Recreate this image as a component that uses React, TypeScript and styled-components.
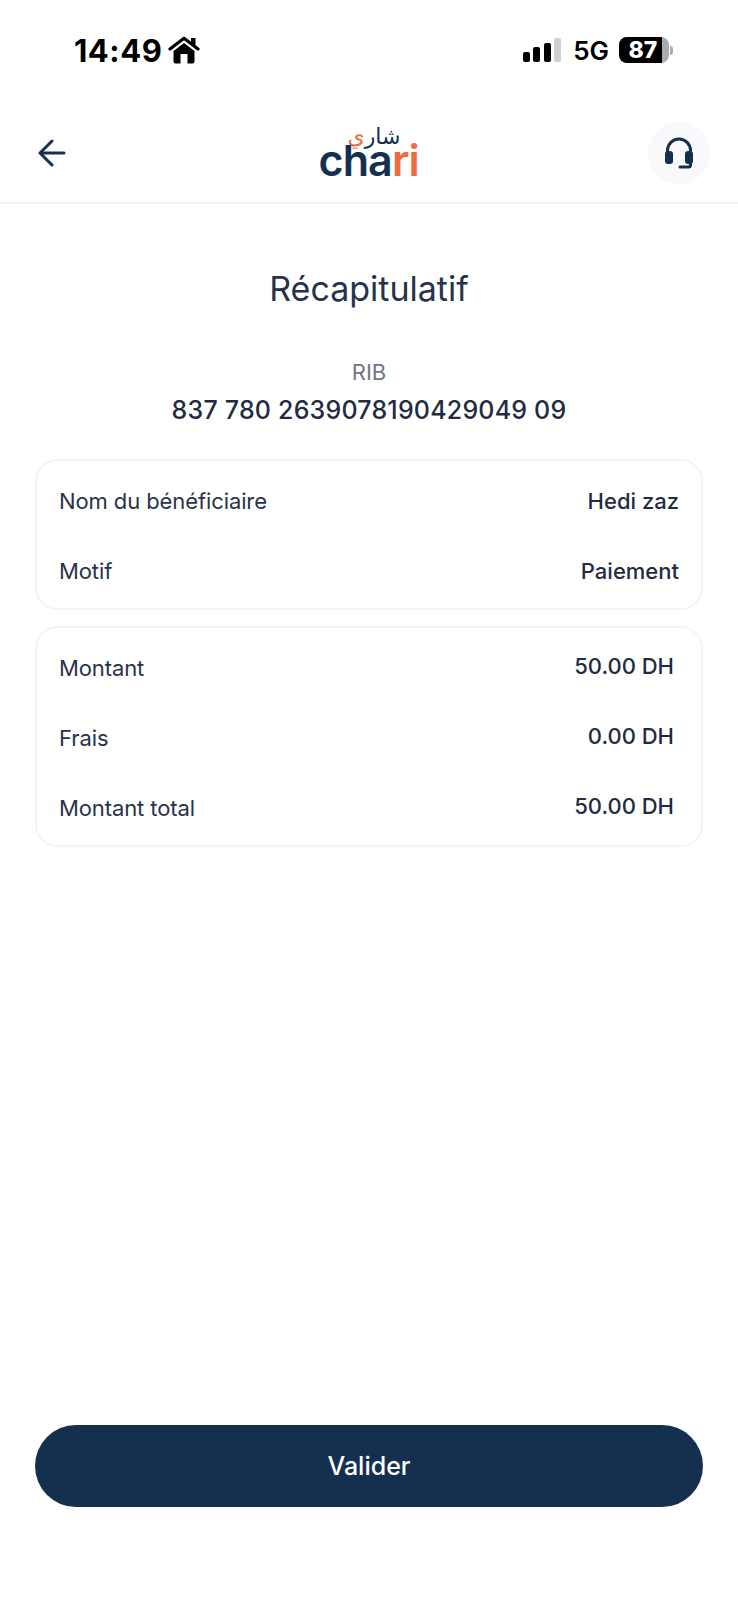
import styled, { createGlobalStyle } from 'styled-components'

const Global = createGlobalStyle`
    html, body {
        margin: 0;
        padding: 0;
        background: #fff;
    }
    * {
        box-sizing: border-box;
    }
`

const Page = styled.div`
    width: 738px;
    height: 1600px;
    display: flex;
    flex-direction: column;
    background: #fff;
    font-family: Inter, 'Noto Sans', sans-serif;
    color: #1f2c41;
    overflow: hidden;
`

const StatusBar = styled.div`
    height: 100px;
    padding: 32px 65px 0 74px;
    display: flex;
    justify-content: space-between;
    align-items: flex-start;
    color: #000;
`

const TimeGroup = styled.div`
    display: flex;
    align-items: center;
    gap: 6px;
    height: 36px;
`

const Time = styled.span`
    font-size: 31px;
    font-weight: 700;
    letter-spacing: 0.5px;
`

const StatusRight = styled.div`
    display: flex;
    align-items: center;
    height: 36px;
`

const Signal = styled.div`
    display: flex;
    align-items: flex-end;
    gap: 3.5px;
    height: 24px;
    margin-right: 12px;
`

const Bar = styled.span<{ $h: number; $off?: boolean }>`
    width: 7px;
    height: ${(p) => p.$h}px;
    border-radius: 2px;
    background: ${(p) => (p.$off ? '#cdd0d4' : '#000')};
`

const Network = styled.span`
    font-size: 26px;
    font-weight: 600;
    margin-right: 10px;
`

const Battery = styled.div`
    width: 50px;
    height: 26px;
    border-radius: 8px;
    overflow: hidden;
    background: #a9adb2;
`

const BatteryFill = styled.div`
    width: 43px;
    height: 100%;
    background: #000;
    color: #fff;
    font-size: 23px;
    font-weight: 800;
    line-height: 26px;
    text-align: center;
    padding-left: 5px;
`

const BatteryTip = styled.span`
    width: 3px;
    height: 9px;
    margin-left: 1px;
    border-radius: 0 3px 3px 0;
    background: #a9adb2;
`

const Header = styled.header`
    height: 104px;
    padding: 0 28px 0 38px;
    display: flex;
    align-items: flex-start;
    justify-content: space-between;
    border-bottom: 2px solid #f2f3f4;
`

const BackButton = styled.div`
    margin-top: 39px;
    width: 32px;
    height: 28px;
    display: flex;
    align-items: center;
`

const Logo = styled.div`
    margin-top: 28px;
    margin-left: 20px;
    width: 101px;
    height: 50px;
    position: relative;
`

const LogoWord = styled.div`
    position: absolute;
    left: 0;
    bottom: -1px;
    font-size: 43px;
    font-weight: 600;
    line-height: 38px;
    letter-spacing: -0.9px;
    color: #14304e;
`

const LogoAccent = styled.span`
    color: #ee6c42;
`

const LogoArabic = styled.div`
    position: absolute;
    right: 19px;
    top: -3px;
    font-family: 'DejaVu Sans', sans-serif;
    font-size: 22px;
    line-height: 24px;
    color: #14304e;
    direction: rtl;
`

const LogoArabicAccent = styled.span`
    color: #ee6c42;
`

const SupportButton = styled.div`
    margin-top: 22px;
    width: 62px;
    height: 62px;
    border-radius: 50%;
    background: #f9f9fb;
    display: flex;
    align-items: center;
    justify-content: center;
`

const Content = styled.main`
    flex: 1;
    display: flex;
    flex-direction: column;
    padding: 0 35px 93px;
`

const Title = styled.h1`
    margin: 64px 0 0;
    font-size: 34px;
    line-height: 42px;
    font-weight: 400;
    text-align: center;
    color: #27334a;
`

const RibLabel = styled.div`
    margin-top: 49px;
    font-size: 22px;
    line-height: 26px;
    text-align: center;
    color: #6f7785;
`

const RibValue = styled.div`
    margin-top: 9px;
    font-size: 25px;
    line-height: 32px;
    font-weight: 500;
    text-align: center;
    letter-spacing: 0.2px;
    color: #1f2c41;
`

const Card = styled.section<{ $mt: number; $pr: number }>`
    margin-top: ${(p) => p.$mt}px;
    padding: 5px ${(p) => p.$pr}px 2px 22px;
    border: 2px solid #f3f4f6;
    border-radius: 22px;
    display: flex;
    flex-direction: column;
`

const Row = styled.div`
    height: 70px;
    display: flex;
    align-items: center;
    justify-content: space-between;
`

const Label = styled.span`
    font-size: 22px;
    letter-spacing: -0.1px;
    color: #27334a;
`

const Value = styled.span<{ $raised?: boolean }>`
    font-size: 22px;
    font-weight: 500;
    color: #1f2c41;
    transform: translateY(${(p) => (p.$raised ? -2 : 0)}px);
`

const SubmitButton = styled.button`
    margin-top: auto;
    width: 668px;
    height: 82px;
    border: none;
    border-radius: 41px;
    background: #14304e;
    color: #fff;
    font-family: Inter, sans-serif;
    font-size: 25px;
    font-weight: 500;
`

export default function App() {
    return (
        <Page>
            <Global />
            <StatusBar>
                <TimeGroup>
                    <Time>14:49</Time>
                    <svg width="32" height="28" viewBox="0 0 32 28">
                        <rect x="23" y="2" width="4.5" height="8" fill="#000" />
                        <path d="M2 13 16 2.2 30 13" fill="none" stroke="#000" strokeWidth="3.2" strokeLinecap="round" strokeLinejoin="round" />
                        <path
                            fillRule="evenodd"
                            d="M5.5 15 16 7l10.5 8v10.5a2 2 0 0 1-2 2h-17a2 2 0 0 1-2-2V15Zm7 3v9.5h7V18h-7Z"
                            fill="#000"
                        />
                    </svg>
                </TimeGroup>
                <StatusRight>
                    <Signal>
                        <Bar $h={10} />
                        <Bar $h={15} />
                        <Bar $h={19} />
                        <Bar $h={24} $off />
                    </Signal>
                    <Network>5G</Network>
                    <Battery>
                        <BatteryFill>87</BatteryFill>
                    </Battery>
                    <BatteryTip />
                </StatusRight>
            </StatusBar>

            <Header>
                <BackButton>
                    <svg width="28" height="28" viewBox="0 0 28 28" fill="none" stroke="#14304e" strokeWidth="3" strokeLinecap="round" strokeLinejoin="round">
                        <path d="M26 14H3" />
                        <path d="M14 2 2 14l12 12" />
                    </svg>
                </BackButton>
                <Logo>
                    <LogoArabic>
                        شار<LogoArabicAccent>ي</LogoArabicAccent>
                    </LogoArabic>
                    <LogoWord>
                        cha<LogoAccent>ri</LogoAccent>
                    </LogoWord>
                </Logo>
                <SupportButton>
                    <svg width="30" height="34" viewBox="0 0 30 34" fill="none">
                        <path d="M3.5 19V14.5a11.5 11.5 0 0 1 23 0V19" stroke="#14304e" strokeWidth="3" />
                        <rect x="1" y="15" width="8" height="13" rx="3" fill="#14304e" />
                        <rect x="21" y="15" width="8" height="13" rx="3" fill="#14304e" />
                        <path d="M26.5 26v3a2 2 0 0 1-2 2H16" stroke="#14304e" strokeWidth="3" strokeLinecap="round" />
                    </svg>
                </SupportButton>
            </Header>

            <Content>
                <Title>Récapitulatif</Title>
                <RibLabel>RIB</RibLabel>
                <RibValue>837 780 2639078190429049 09</RibValue>

                <Card $mt={33} $pr={22}>
                    <Row>
                        <Label>Nom du bénéficiaire</Label>
                        <Value>Hedi zaz</Value>
                    </Row>
                    <Row>
                        <Label>Motif</Label>
                        <Value>Paiement</Value>
                    </Row>
                </Card>

                <Card $mt={16} $pr={27}>
                    <Row>
                        <Label>Montant</Label>
                        <Value $raised>50.00 DH</Value>
                    </Row>
                    <Row>
                        <Label>Frais</Label>
                        <Value $raised>0.00 DH</Value>
                    </Row>
                    <Row>
                        <Label>Montant total</Label>
                        <Value $raised>50.00 DH</Value>
                    </Row>
                </Card>

                <SubmitButton>Valider</SubmitButton>
            </Content>
        </Page>
    )
}
